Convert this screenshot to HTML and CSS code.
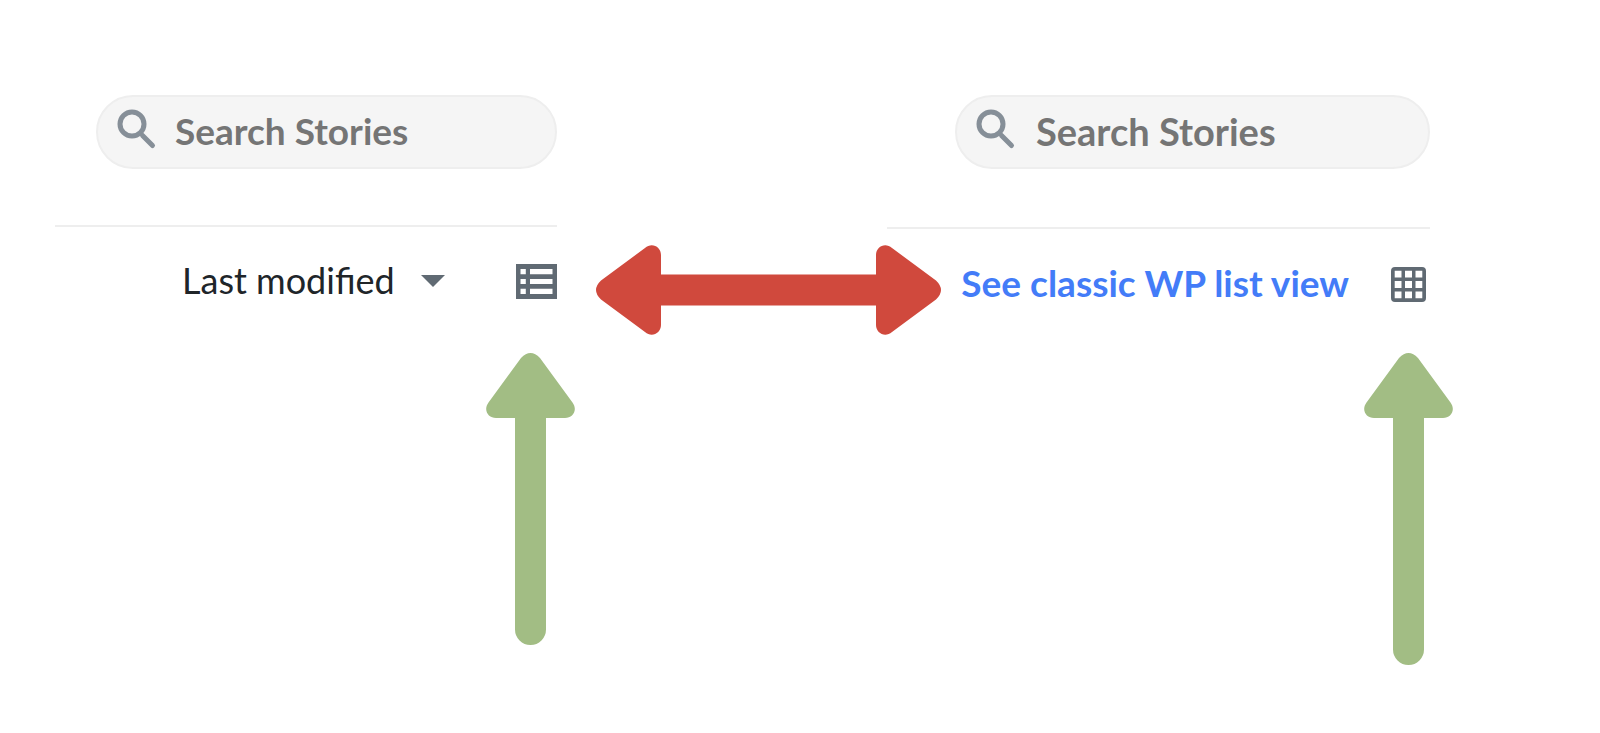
FILE: index.html
```html
<!DOCTYPE html>
<html lang="en">
<head>
<meta charset="utf-8">
<title>Stories view toggle</title>
<link rel="stylesheet" href="styles.css">
</head>
<body>
<main class="board">
  <section class="panel">
    <label class="search">
      <svg class="search-icon" viewBox="0 0 37 38" aria-hidden="true"><circle cx="14" cy="14" r="12"/><path d="M24.500 25.500 34.500 35.500"/></svg>
      <input class="search-input" type="search" placeholder="Search Stories" aria-label="Search Stories">
    </label>
    <div class="toolbar">
      <label class="sort">
        <select class="sort-select" aria-label="Sort by"><option>Last modified</option></select>
        <svg class="caret" viewBox="0 0 24 12" aria-hidden="true"><path d="M0 0H24L12 12Z"/></svg>
      </label>
      <button class="view-button" type="button" aria-label="List view">
        <svg class="list-icon" viewBox="0 0 41 35"><path fill-rule="evenodd" d="M0 0H41V35H0ZM4.500 5V10.200H9.800V5ZM14 5V10.200H36.500V5ZM4.500 15V20H9.800V15ZM14 15V20H36.500V15ZM4.500 24.800V30H9.800V24.800ZM14 24.800V30H36.500V24.800Z"/></svg>
      </button>
    </div>
    <svg class="up-arrow" width="89" height="292" viewBox="0 0 89 292" aria-hidden="true"><path d="M35 5Q44.500-5 54 5L86.500 49.500C92 57 87 65 79 65H60V276.500A15.500 15.500 0 0 1 29 276.500V65H10C2 65-3 57 2.500 49.500Z"/></svg>
  </section>

  <svg class="swap-arrow" width="345" height="90" viewBox="0 0 345 90" aria-hidden="true"><path d="M5 35.500 49 3C56-3 65 2 65 10V29.500H280V10C280 2 289-3 296 3L340 35.500Q350 45 340 54.500L296 87C289 93 280 88 280 80V60.500H65V80C65 88 56 93 49 87L5 54.500Q-5 45 5 35.500Z"/></svg>

  <section class="panel panel-list">
    <label class="search">
      <svg class="search-icon" viewBox="0 0 37 38" aria-hidden="true"><circle cx="14" cy="14" r="12"/><path d="M24.500 25.500 34.500 35.500"/></svg>
      <input class="search-input" type="search" placeholder="Search Stories" aria-label="Search Stories">
    </label>
    <div class="toolbar">
      <a class="classic-link" href="#">See classic WP list view</a>
      <button class="view-button" type="button" aria-label="Grid view">
        <svg class="grid-icon" viewBox="0 0 35 35"><path fill-rule="evenodd" d="M4 0H31Q35 0 35 4V31Q35 35 31 35H4Q0 35 0 31V4Q0 0 4 0ZM3.700 3.700V10.500H10.500V3.700ZM14 3.700V10.500H21V3.700ZM24.500 3.700V10.500H31.300V3.700ZM3.700 14V21H10.500V14ZM14 14V21H21V14ZM24.500 14V21H31.300V14ZM3.700 24.500V31.300H10.500V24.500ZM14 24.500V31.300H21V24.500ZM24.500 24.500V31.300H31.300V24.500Z"/></svg>
      </button>
    </div>
    <svg class="up-arrow" width="89" height="312" viewBox="0 0 89 312" aria-hidden="true"><path d="M35 5Q44.500-5 54 5L86.500 49.500C92 57 87 65 79 65H60V296.500A15.500 15.500 0 0 1 29 296.500V65H10C2 65-3 57 2.500 49.500Z"/></svg>
  </section>
</main>
</body>
</html>
```
FILE: styles.css
```css
* {
  box-sizing: border-box;
}

body {
  margin: 0;
  background: #fff;
  color: #202529;
  font-family: Lato, "Open Sans", sans-serif;
  font-size: 37px;
  line-height: 44px;
}

.board {
  display: grid;
  grid-template-columns: minmax(0, 502fr) minmax(0, 330fr) minmax(0, 543fr);
  padding: 95px 170px 68px 55px;
}

.panel {
  display: flex;
  flex-direction: column;
}

.search {
  display: flex;
  align-items: center;
  gap: 20px;
  height: 74px;
  margin-left: 41px;
  padding: 0 20px;
  border: 2px solid #eee;
  border-radius: 37px;
  background: #f5f5f5;
}

.search-icon {
  flex: none;
  width: 37px;
  height: 38px;
  margin-bottom: 6px;
  fill: none;
  stroke: #868f98;
  stroke-width: 5;
  stroke-linecap: round;
  overflow: visible;
}

.search-input {
  flex: 1;
  min-width: 0;
  height: 44px;
  margin-bottom: 2px;
  padding: 0;
  border: 0;
  outline: 0;
  background: none;
  color: #757575;
  font: inherit;
  font-weight: 700;
}

.search-input::placeholder {
  color: #757575;
  opacity: 1;
}

.toolbar {
  display: flex;
  align-items: center;
  justify-content: flex-end;
  gap: 71px;
  height: 110px;
  margin-top: 56px;
  border-top: 2px solid #eee;
}

.sort {
  display: flex;
  align-items: center;
  gap: 26px;
  font-size: 36px;
}

.sort-select {
  appearance: none;
  margin-bottom: 2px;
  padding: 0;
  border: 0;
  background: none;
  color: inherit;
  font: inherit;
}

.caret {
  width: 24px;
  height: 12px;
  fill: #606a73;
}

.view-button {
  display: flex;
  padding: 0;
  border: 0;
  background: none;
  fill: #606a73;
}

.list-icon {
  width: 41px;
  height: 35px;
}

.grid-icon {
  width: 35px;
  height: 35px;
}

.classic-link {
  margin-bottom: 2px;
  color: #437cf8;
  font-weight: 700;
  text-decoration: none;
  white-space: nowrap;
}

.up-arrow {
  align-self: flex-end;
  margin: 18px -18px 0 0;
  fill: #a2bd84;
}

.swap-arrow {
  margin: 150px 0 0 39px;
  fill: #d0493d;
}

.panel-list .search {
  gap: 22px;
  margin-left: 68px;
}

.panel-list .search-input {
  font-size: 38px;
}

.panel-list .toolbar {
  gap: 42px;
  height: 112px;
  margin-top: 58px;
  padding-right: 4px;
}

.panel-list .up-arrow {
  margin: 14px -23px 0 0;
}
```
